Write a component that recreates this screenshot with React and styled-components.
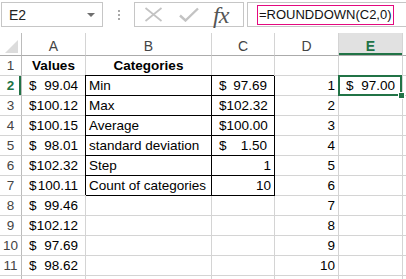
import React from "react";
import styled, { createGlobalStyle, css } from "styled-components";

const GREEN = "#217346";
const GRID = "#d4d4d4";

const GlobalStyle = createGlobalStyle`
  html, body {
    margin: 0;
    padding: 0;
    background: #fff;
    overflow: hidden;
  }
  body {
    font-family: "Liberation Sans", Arial, sans-serif;
    color: #000;
  }
`;

const Sheet = styled.div`
  width: 406px;
  height: 279px;
  overflow: hidden;
  background: #fff;
`;

/* ---------- formula bar ---------- */

const FormulaBar = styled.div`
  display: flex;
  align-items: flex-start;
  height: 33px;
  padding: 2px 0 0 1px;
  box-sizing: border-box;
`;

const NameBox = styled.div`
  width: 102px;
  height: 25px;
  box-sizing: border-box;
  border: 1px solid #c6c6c6;
  display: flex;
  align-items: center;
  justify-content: space-between;
  padding: 0 7px 0 7px;
  font-size: 14px;
  color: #222;
`;

const Caret = styled.span`
  width: 0;
  height: 0;
  border-left: 4px solid transparent;
  border-right: 4px solid transparent;
  border-top: 4px solid #6f6f6f;
`;

const Grip = styled.div`
  width: 31px;
  height: 25px;
  display: flex;
  flex-direction: column;
  align-items: center;
  justify-content: center;
  gap: 2px;

  span {
    width: 2px;
    height: 2px;
    background: #a9a9a9;
  }
`;

const ButtonGroup = styled.div`
  width: 110px;
  height: 25px;
  box-sizing: border-box;
  border: 1px solid #c6c6c6;
  display: flex;
  align-items: center;
  padding-left: 9px;
  gap: 16px;
`;

const Fx = styled.span`
  font-family: "Liberation Serif", "Times New Roman", serif;
  font-style: italic;
  font-size: 24px;
  color: #555;
  letter-spacing: -1px;
  margin-left: -2px;
  line-height: 1;
`;

const FormulaInput = styled.div`
  flex: 1;
  margin-left: 3px;
  height: 25px;
  box-sizing: border-box;
  border: 1px solid #c6c6c6;
  border-right: none;
  display: flex;
  align-items: center;
  padding-left: 9px;
`;

const Formula = styled.span`
  border: 1.5px solid #e4097f;
  padding: 1px 1px 1px 1px;
  font-size: 13px;
  line-height: 16px;
  color: #111;
`;

/* ---------- grid ---------- */

const Grid = styled.div`
  display: grid;
  grid-template-columns: 22px 64px 126px 63px 64px 64px 1fr;
  grid-template-rows: 23px repeat(12, 20px);
`;

const Corner = styled.div`
  border-right: 1px solid #bcbcbc;
  border-bottom: 1px solid #ababab;
  display: flex;
  align-items: flex-end;
  justify-content: flex-end;
  padding: 0 3px 2px 0;
`;

const ColHead = styled.div`
  border-right: 1px solid ${GRID};
  border-bottom: 1px solid #ababab;
  display: flex;
  align-items: center;
  justify-content: center;
  padding-top: 4px;
  font-size: 14px;
  color: #444;
  ${(p) =>
    p.$active &&
    css`
      background: #e1e1e1;
      color: ${GREEN};
      font-weight: bold;
      box-shadow: inset 0 -2px 0 ${GREEN};
    `}
`;

const RowHead = styled.div`
  border-right: 1px solid #bcbcbc;
  border-bottom: 1px solid ${GRID};
  display: flex;
  align-items: flex-end;
  justify-content: center;
  padding-bottom: 1px;
  font-size: 13.5px;
  line-height: 16px;
  color: #444;
  ${(p) =>
    p.$active &&
    css`
      color: ${GREEN};
      font-weight: bold;
      box-shadow: inset -2px 0 0 ${GREEN};
    `}
`;

const Cell = styled.div`
  position: relative;
  border-right: 1px solid ${GRID};
  border-bottom: 1px solid ${GRID};
  display: flex;
  align-items: flex-end;
  justify-content: ${(p) =>
    p.$align === "right" ? "flex-end" : p.$align === "center" ? "center" : "flex-start"};
  padding: 0 3px 1px 3px;
  font-size: 13.5px;
  line-height: 16px;
  white-space: nowrap;
  font-weight: ${(p) => (p.$bold ? "bold" : "normal")};
  ${(p) =>
    p.$boxed &&
    css`
      border-right-color: #000;
      border-bottom-color: #000;
      box-shadow: -1px -1px 0 #000;
    `}
  ${(p) =>
    p.$selected &&
    css`
      &::after {
        content: "";
        position: absolute;
        top: -1px;
        left: -1px;
        right: 0;
        bottom: -1px;
        border: 2px solid ${GREEN};
        z-index: 1;
      }
      &::before {
        content: "";
        position: absolute;
        right: -3px;
        bottom: -4px;
        width: 5px;
        height: 5px;
        background: ${GREEN};
        border: 1px solid #fff;
        z-index: 2;
      }
    `}
`;

const Money = styled(Cell)`
  justify-content: space-between;
  padding: 0 7px 1px 7px;
`;

const Tri = () => (
  <svg width="13" height="13" viewBox="0 0 13 13">
    <polygon points="13,0 13,13 0,13" fill="#dcdcdc" />
  </svg>
);

const XIcon = () => (
  <svg width="19" height="15" viewBox="0 0 19 15">
    <path d="M1.5 1 L17.5 14 M17.5 1 L1.5 14" stroke="#c3c3c3" strokeWidth="1.7" fill="none" />
  </svg>
);

const CheckIcon = () => (
  <svg width="20" height="15" viewBox="0 0 20 15">
    <path d="M1 8.5 L6.5 13.5 L19 1.5" stroke="#c3c3c3" strokeWidth="2.4" fill="none" />
  </svg>
);

const values = ["99.04", "100.12", "100.15", "98.01", "102.32", "100.11", "99.46", "102.12", "97.69", "98.62"];

const categories = [
  { label: "Min", money: "97.69" },
  { label: "Max", money: "102.32" },
  { label: "Average", money: "100.00" },
  { label: "standard deviation", money: "1.50" },
  { label: "Step", plain: "1" },
  { label: "Count of categories", plain: "10" },
];

const MoneyCell = ({ amount, ...rest }) => (
  <Money {...rest}>
    <span>$</span>
    <span>{amount}</span>
  </Money>
);

export default function App() {
  const rows = [];
  for (let r = 1; r <= 12; r++) {
    const cat = categories[r - 2];
    const d = r >= 2 && r <= 11 ? String(r - 1) : "";

    let a = <Cell key="a" />;
    if (r === 1) a = <Cell key="a" $align="center" $bold>Values</Cell>;
    else if (values[r - 2]) a = <MoneyCell key="a" amount={values[r - 2]} />;

    let b = <Cell key="b" />;
    let c = <Cell key="c" />;
    if (r === 1) {
      b = <Cell key="b" $align="center" $bold>Categories</Cell>;
    } else if (cat) {
      b = <Cell key="b" $boxed>{cat.label}</Cell>;
      c = cat.money ? (
        <MoneyCell key="c" amount={cat.money} $boxed />
      ) : (
        <Cell key="c" $boxed $align="right">{cat.plain}</Cell>
      );
    }

    const e = r === 2 ? <MoneyCell key="e" amount="97.00" $selected /> : <Cell key="e" />;

    rows.push(
      <React.Fragment key={r}>
        <RowHead $active={r === 2}>{r <= 11 ? r : ""}</RowHead>
        {a}
        {b}
        {c}
        <Cell $align="right">{d}</Cell>
        {e}
        <Cell />
      </React.Fragment>
    );
  }

  return (
    <Sheet>
      <GlobalStyle />
      <FormulaBar>
        <NameBox>
          <span>E2</span>
          <Caret />
        </NameBox>
        <Grip>
          <span />
          <span />
          <span />
        </Grip>
        <ButtonGroup>
          <XIcon />
          <CheckIcon />
          <Fx>fx</Fx>
        </ButtonGroup>
        <FormulaInput>
          <Formula>=ROUNDDOWN(C2,0)</Formula>
        </FormulaInput>
      </FormulaBar>
      <Grid>
        <Corner>
          <Tri />
        </Corner>
        <ColHead>A</ColHead>
        <ColHead>B</ColHead>
        <ColHead>C</ColHead>
        <ColHead>D</ColHead>
        <ColHead $active>E</ColHead>
        <ColHead />
        {rows}
      </Grid>
    </Sheet>
  );
}
